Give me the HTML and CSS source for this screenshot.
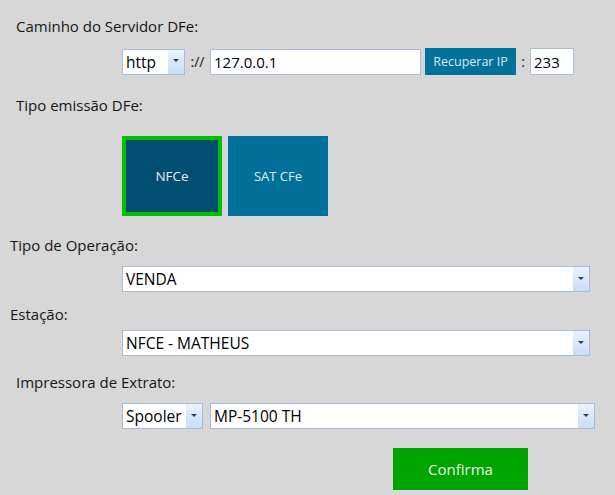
FILE: index.html
```html
<!DOCTYPE html>
<html lang="pt-BR">
<head>
  <meta charset="UTF-8" />
  <title>Configuração DFe</title>
  <link rel="stylesheet" href="styles.css">
</head>
<body>
  <div class="form">
    <div class="label label-server">Caminho do Servidor DFe:</div>
    <div class="row row-server">
      <div class="combo combo-proto">
        <span class="value">http</span>
        <span class="drop"><i class="arrow"></i></span>
      </div>
      <span class="sep">://</span>
      <div class="field field-ip">127.0.0.1</div>
      <button class="btn-ip">Recuperar IP</button>
      <span class="sep sep-colon">:</span>
      <div class="field field-port">233</div>
    </div>

    <div class="label label-tipo">Tipo emissão DFe:</div>
    <div class="row tiles">
      <div class="tile selected">NFCe</div>
      <div class="tile">SAT CFe</div>
    </div>

    <div class="label label-left label-op">Tipo de Operação:</div>
    <div class="row">
      <div class="combo combo-wide">
        <span class="value">VENDA</span>
        <span class="drop"><i class="arrow"></i></span>
      </div>
    </div>

    <div class="label label-left label-est">Estação:</div>
    <div class="row row-est">
      <div class="combo combo-wide">
        <span class="value">NFCE - MATHEUS</span>
        <span class="drop"><i class="arrow"></i></span>
      </div>
    </div>

    <div class="label label-imp">Impressora de Extrato:</div>
    <div class="row row-printer">
      <div class="combo combo-spooler">
        <span class="value">Spooler</span>
        <span class="drop"><i class="arrow"></i></span>
      </div>
      <div class="combo combo-printer">
        <span class="value">MP-5100 TH</span>
        <span class="drop"><i class="arrow"></i></span>
      </div>
    </div>

    <div class="actions">
      <button class="btn-confirm">Confirma</button>
    </div>
  </div>
</body>
</html>
```

FILE: styles.css
```css
body {
  margin: 0;
  background: #d7d7d7;
  color: #161616;
  font-family: "Open Sans", "Noto Sans", Arial, sans-serif;
}
.form {
  width: 615px;
  height: 495px;
  padding-top: 16px;
  box-sizing: border-box;
}
.label {
  height: 20px;
  line-height: 20px;
  font-size: 15px;
  margin-left: 16px;
  white-space: nowrap;
}
.label-left {
  margin-left: 10px;
}
.label-tipo {
  margin-top: 20px;
}
.label-op {
  margin-top: 19px;
}
.label-est {
  margin-top: 12px;
}
.label-imp {
  margin-top: 16px;
}
.row {
  display: flex;
  align-items: center;
  margin-left: 122px;
  margin-top: 11px;
}
.row-server {
  margin-top: 12px;
  height: 27px;
}
.row-est {
  margin-top: 6px;
}
.combo,
.field {
  display: flex;
  align-items: center;
  box-sizing: border-box;
  height: 26px;
  background: #fff;
  border: 1px solid #abbdd6;
  font-size: 15.5px;
  color: #000;
}
.combo .value {
  flex: 1;
  padding-left: 3px;
  white-space: nowrap;
}
.drop {
  width: 16px;
  height: 100%;
  display: flex;
  align-items: center;
  justify-content: center;
  background: linear-gradient(#eaf2fc, #cadcf5);
}
.arrow {
  width: 0;
  height: 0;
  border-left: 3px solid transparent;
  border-right: 3px solid transparent;
  border-top: 3px solid #2a3f5c;
  margin-top: -2px;
}
.combo-proto {
  width: 63px;
}
.sep {
  font-size: 14px;
  width: 25px;
  text-align: center;
}
.sep-colon {
  width: 14px;
}
.field {
  padding-left: 3px;
}
.field-ip {
  width: 211px;
  font-size: 15px;
}
.field-port {
  width: 44px;
  height: 27px;
  font-size: 15px;
}
.btn-ip {
  margin-left: 4px;
  height: 27px;
  width: 91px;
  padding: 0;
  border: none;
  background: #00729c;
  color: #dfe8ef;
  font-family: inherit;
  font-size: 12.5px;
}
.tiles {
  margin-top: 21px;
  gap: 6px;
}
.tile {
  width: 100px;
  height: 80px;
  box-sizing: border-box;
  display: flex;
  align-items: center;
  justify-content: center;
  background: #00709b;
  color: #e3ecf2;
  font-size: 13px;
}
.tile.selected {
  background: #004f73;
  border: 4px solid #00c000;
  font-size: 13.5px;
}
.combo-wide {
  width: 468px;
}
.combo-spooler {
  width: 81px;
}
.combo-printer {
  width: 385px;
  margin-left: 7px;
}
.actions {
  display: flex;
  margin-left: 393px;
  margin-top: 19px;
}
.btn-confirm {
  width: 135px;
  height: 42px;
  border: none;
  background: #00a400;
  color: #e9fbe4;
  font-family: inherit;
  font-size: 15px;
}
```
